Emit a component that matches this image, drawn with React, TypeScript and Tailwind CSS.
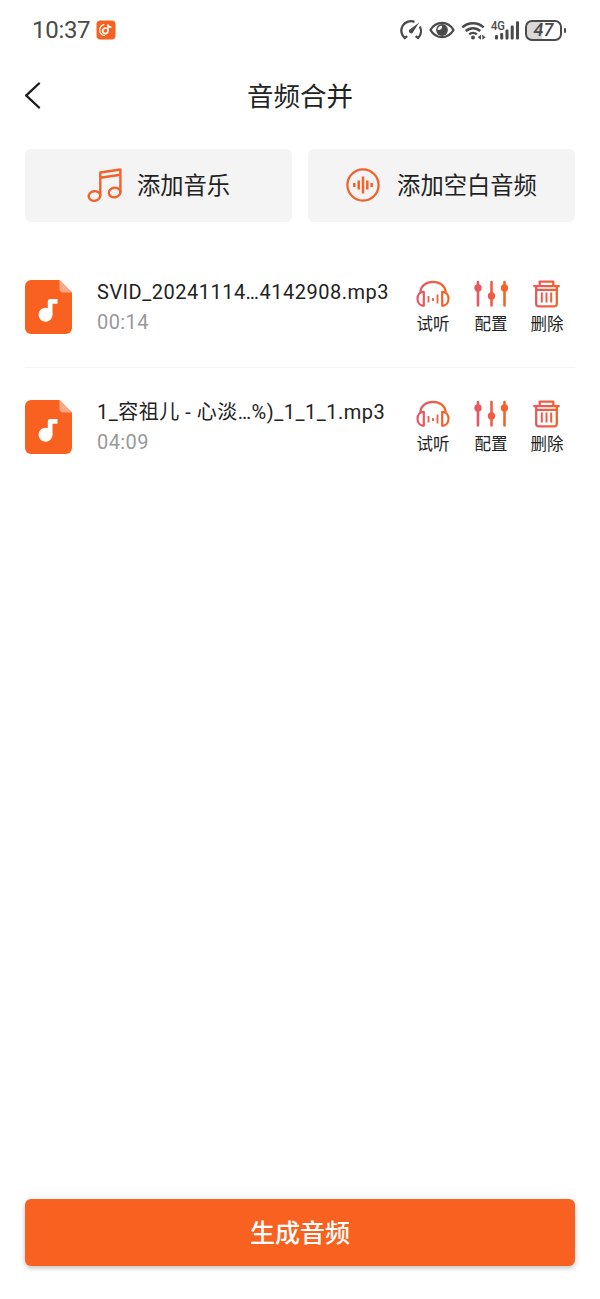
import type { ReactNode } from "react";

type Track = {
  id: number;
  title: string;
  duration: string;
};

const tracks: Track[] = [
  { id: 1, title: "SVID_20241114…4142908.mp3", duration: "00:14" },
  { id: 2, title: "1_容祖儿 - 心淡…%)_1_1_1.mp3", duration: "04:09" },
];

function StatusBar() {
  return (
    <div className="h-[60px] pl-8 pr-[34px] flex items-center justify-between text-[#4a4a4a]">
      <div className="flex items-center gap-[6px]">
        <span className="text-[24px] leading-none tracking-[-0.3px]">10:37</span>
        <svg width={20} height={20} viewBox="0 0 20 20" fill="none">
          <rect x="0.5" y="0.5" width="19" height="19" rx="4" fill="#f7601e" />
          <g stroke="white" strokeLinecap="round">
            <path d="M8 4.700A5.500 5.500 0 0 0 8.500 15.500" strokeWidth="1.2" />
            <path d="M10 8.300A2.700 2.700 0 1 0 12 11V4.600c.3 1.500 1.200 2.500 2.800 2.600" strokeWidth="1.700" />
          </g>
        </svg>
      </div>
      <div className="flex items-center">
        <svg width={23} height={22} viewBox="0 0 23 22" fill="none" stroke="currentColor" strokeWidth="2.3">
          <path d="M7.200 17.200L4.800 19A9.500 9.500 0 0 1 14.500 2.900" />
          <path d="M19.800 7.500A9.500 9.500 0 0 1 18 19l-2.400-1.800" />
          <path d="M19.200 3.500L13 13.200a2.100 2.100 0 1 1-3.200-2.600z" fill="currentColor" stroke="none" />
        </svg>
        <svg className="ml-[6px]" width={26} height={20} viewBox="0 0 26 20" fill="none">
          <path d="M1.500 10C7 .5 19 .5 24.500 10 19 19.500 7 19.500 1.500 10z" stroke="currentColor" strokeWidth="2.300" strokeLinejoin="round" />
          <circle cx="13" cy="10" r="5.900" fill="currentColor" />
          <path d="M13 5.700c.5 2.700-1.600 4.900-4.500 4.100.1-2.300 1.900-4.200 4.500-4.100z" fill="white" />
        </svg>
        <svg className="ml-[6px]" width={26} height={22} viewBox="0 0 26 22" fill="none" stroke="currentColor">
          <path d="M1.300 8.300a16 16 0 0 1 21.400 0M4.800 12a10.600 10.600 0 0 1 14.400 0M8.200 15.400a5.600 5.600 0 0 1 7.600 0" strokeWidth="2.400" />
          <circle cx="12" cy="18.500" r="2" fill="currentColor" stroke="none" />
          <path d="M20 15.700v5l-3.300-2.500zM21.300 15.700v5l3.300-2.500z" fill="currentColor" stroke="none" />
        </svg>
        <svg className="ml-[4px]" width={30} height={22} viewBox="0 0 30 22" fill="currentColor">
          <text x="0" y="11" fontSize="12.500" fontWeight="500" textLength="14" lengthAdjust="spacingAndGlyphs">4G</text>
          <rect x="4" y="16" width="3" height="4.500" rx="1" />
          <rect x="9.200" y="14" width="3" height="6.500" rx="1" />
          <rect x="14.500" y="10.500" width="3" height="10" rx="1" />
          <rect x="19.700" y="6.500" width="3" height="14" rx="1" />
          <rect x="25" y="2.200" width="3" height="18.300" rx="1" />
        </svg>
        <div className="ml-[4px] w-[37px] h-[21px] rounded-[7px] border-2 border-current bg-[linear-gradient(90deg,#d8d8d8_45%,white_45%)] flex items-center justify-center text-[18px] leading-none font-medium italic">
          47
        </div>
        <div className="ml-[2px] w-[2px] h-[5px] rounded-full bg-current" />
      </div>
    </div>
  );
}

function MusicIcon() {
  return (
    <svg width={36} height={36} viewBox="0 0 36 36" fill="none" stroke="#f1622c" strokeWidth="2.4" strokeLinejoin="round">
      <ellipse cx="7.5" cy="29" rx="5.800" ry="4.800" transform="rotate(-8 7.5 29)" />
      <ellipse cx="27.600" cy="25.500" rx="5.800" ry="4.800" transform="rotate(-8 27.600 25.500)" />
      <path d="M13.300 28.500V5.500L33.400 2.500v23M13.300 10.800l20.100-3" />
    </svg>
  );
}

function WaveIcon() {
  return (
    <svg width={34} height={34} viewBox="0 0 34 34" fill="none" stroke="#f1622c">
      <circle cx="17" cy="17" r="15.6" strokeWidth="2.3" />
      <path d="M8.300 15v4M12.700 12.500v9M17 8.500v17M21.300 12.500v9M25.700 15v4" strokeWidth="2.500" />
    </svg>
  );
}

function FileIcon() {
  return (
    <svg className="shrink-0 -mt-[2px]" width={47} height={54} viewBox="0 0 47 54">
      <path d="M6 0H34.500L47 12.500V48a6 6 0 0 1-6 6H6a6 6 0 0 1-6-6V6a6 6 0 0 1 6-6z" fill="#f8611f" />
      <path d="M34.500 0L47 12.500H38.500a4 4 0 0 1-4-4z" fill="#fba987" />
      <circle cx="20.500" cy="34.700" r="7" fill="white" />
      <path d="M22.800 35V21.500a2.500 2.500 0 0 1 2.500-2.500H32.500v4.700H27.500V35z" fill="white" />
    </svg>
  );
}

// Shared left-to-right tint of the action icons
function Tint({ id }: { id: string }) {
  return (
    <defs>
      <linearGradient id={id} gradientUnits="userSpaceOnUse" x1="0" y1="0" x2="34" y2="0">
        <stop offset="0" stopColor="#e5566a" />
        <stop offset="1" stopColor="#f8641f" />
      </linearGradient>
    </defs>
  );
}

function ListenIcon() {
  return (
    <svg width={34} height={28} viewBox="0 0 34 28" fill="none" stroke="url(#listen)" strokeWidth="2.2">
      <Tint id="listen" />
      <path d="M4.300 12.500C4.800 6 10 1.800 17 1.800s12.200 4.200 12.700 10.700" />
      <path
        d="M7.800 11.800v14C4 25.800 1.500 23 1.500 18.800s2.500-7 6.300-7zM26.200 11.800v14c3.800 0 6.300-2.800 6.300-7s-2.500-7-6.300-7z"
        strokeLinejoin="round"
      />
      <path d="M12.500 16v6.500M17 18v3M21.500 14.500v9" strokeWidth="1.800" />
    </svg>
  );
}

function ConfigIcon() {
  return (
    <svg width={34} height={28} viewBox="0 0 34 28" fill="none">
      <Tint id="config" />
      <path d="M4 2L4.010 25.500M17.500 2L17.510 25.500M30.500 2L30.510 25.500" stroke="url(#config)" strokeWidth="2.600" strokeLinecap="round" />
      <g fill="url(#config)">
        <circle cx="4" cy="8" r="3.700" />
        <circle cx="17.500" cy="16" r="3.700" />
        <circle cx="30.500" cy="8" r="3.700" />
      </g>
    </svg>
  );
}

function DeleteIcon() {
  return (
    <svg width={34} height={28} viewBox="0 0 34 28" fill="none" stroke="url(#delete)" strokeWidth="2.300" strokeLinejoin="round">
      <Tint id="delete" />
      <path d="M3.300 6.100h26.400M9.700 6.100V1.600h13.600v4.500M6.200 6.100V24a2.300 2.300 0 0 0 2.300 2.300h16a2.300 2.300 0 0 0 2.300-2.300V6.100M6.200 9.800h20.600" />
      <path d="M11.800 12.500v10M16.500 12.500v10M21.200 12.500v10" strokeWidth="2" />
    </svg>
  );
}

function Action({ label, children }: { label: string; children: ReactNode }) {
  return (
    <button className="w-[34px] pb-px flex flex-col items-center gap-2 text-[16.5px] leading-[18px] whitespace-nowrap">
      {children}
      <span>{label}</span>
    </button>
  );
}

function TrackRow({ track }: { track: Track }) {
  return (
    <li className="h-[120px] flex items-center border-b border-[#f4f4f4] last:border-b-transparent">
      <FileIcon />
      <div className="ml-[25px] w-[310px] pb-px whitespace-nowrap text-[20px] leading-[30px]">
        <p className="tracking-[0.5px]">{track.title}</p>
        <p className="tracking-[0.4px] text-[#999]">{track.duration}</p>
      </div>
      <div className="ml-[9px] flex">
        <Action label="试听">
          <ListenIcon />
        </Action>
        <div className="ml-6">
          <Action label="配置">
            <ConfigIcon />
          </Action>
        </div>
        <div className="ml-[22px]">
          <Action label="删除">
            <DeleteIcon />
          </Action>
        </div>
      </div>
    </li>
  );
}

export default function App() {
  return (
    <div className="h-[1299px] w-[600px] bg-white flex flex-col text-[#222] font-[Roboto,'Noto_Sans_CJK_SC',sans-serif]">
      <StatusBar />
      <header className="h-[72px] px-[25px] grid grid-cols-[30px_1fr_30px] items-center">
        <button aria-label="返回">
          <svg width={16} height={28} viewBox="0 0 16 28" fill="none" stroke="#1c1c1c" strokeWidth="2.4">
            <path d="M14 1.500L1.300 13.500L14 25.500" strokeLinecap="round" />
          </svg>
        </button>
        <h1 className="pt-[2px] text-center text-[26.5px] leading-none">音频合并</h1>
      </header>
      <div className="mt-[17px] px-[25px] grid grid-cols-2 gap-4">
        <button className="h-[73px] pb-[2px] rounded-[6px] bg-[#f4f4f4] flex items-center justify-center gap-[14px] text-[23.3px]">
          <MusicIcon />
          <span className="pt-1">添加音乐</span>
        </button>
        <button className="h-[73px] pb-[2px] rounded-[6px] bg-[#f4f4f4] flex items-center justify-center gap-[17px] text-[23.3px]">
          <WaveIcon />
          <span className="pt-1">添加空白音频</span>
        </button>
      </div>
      <ul className="mt-[26px] px-[25px]">
        {tracks.map((track) => (
          <TrackRow key={track.id} track={track} />
        ))}
      </ul>
      <div className="mt-auto px-[25px] pb-[33px]">
        <button className="w-full h-[67px] pt-[2px] rounded-[6px] bg-[#f8611f] text-white text-[25px] font-medium shadow-[0_2px_5px_rgba(0,0,0,0.25)]">
          生成音频
        </button>
      </div>
    </div>
  );
}
